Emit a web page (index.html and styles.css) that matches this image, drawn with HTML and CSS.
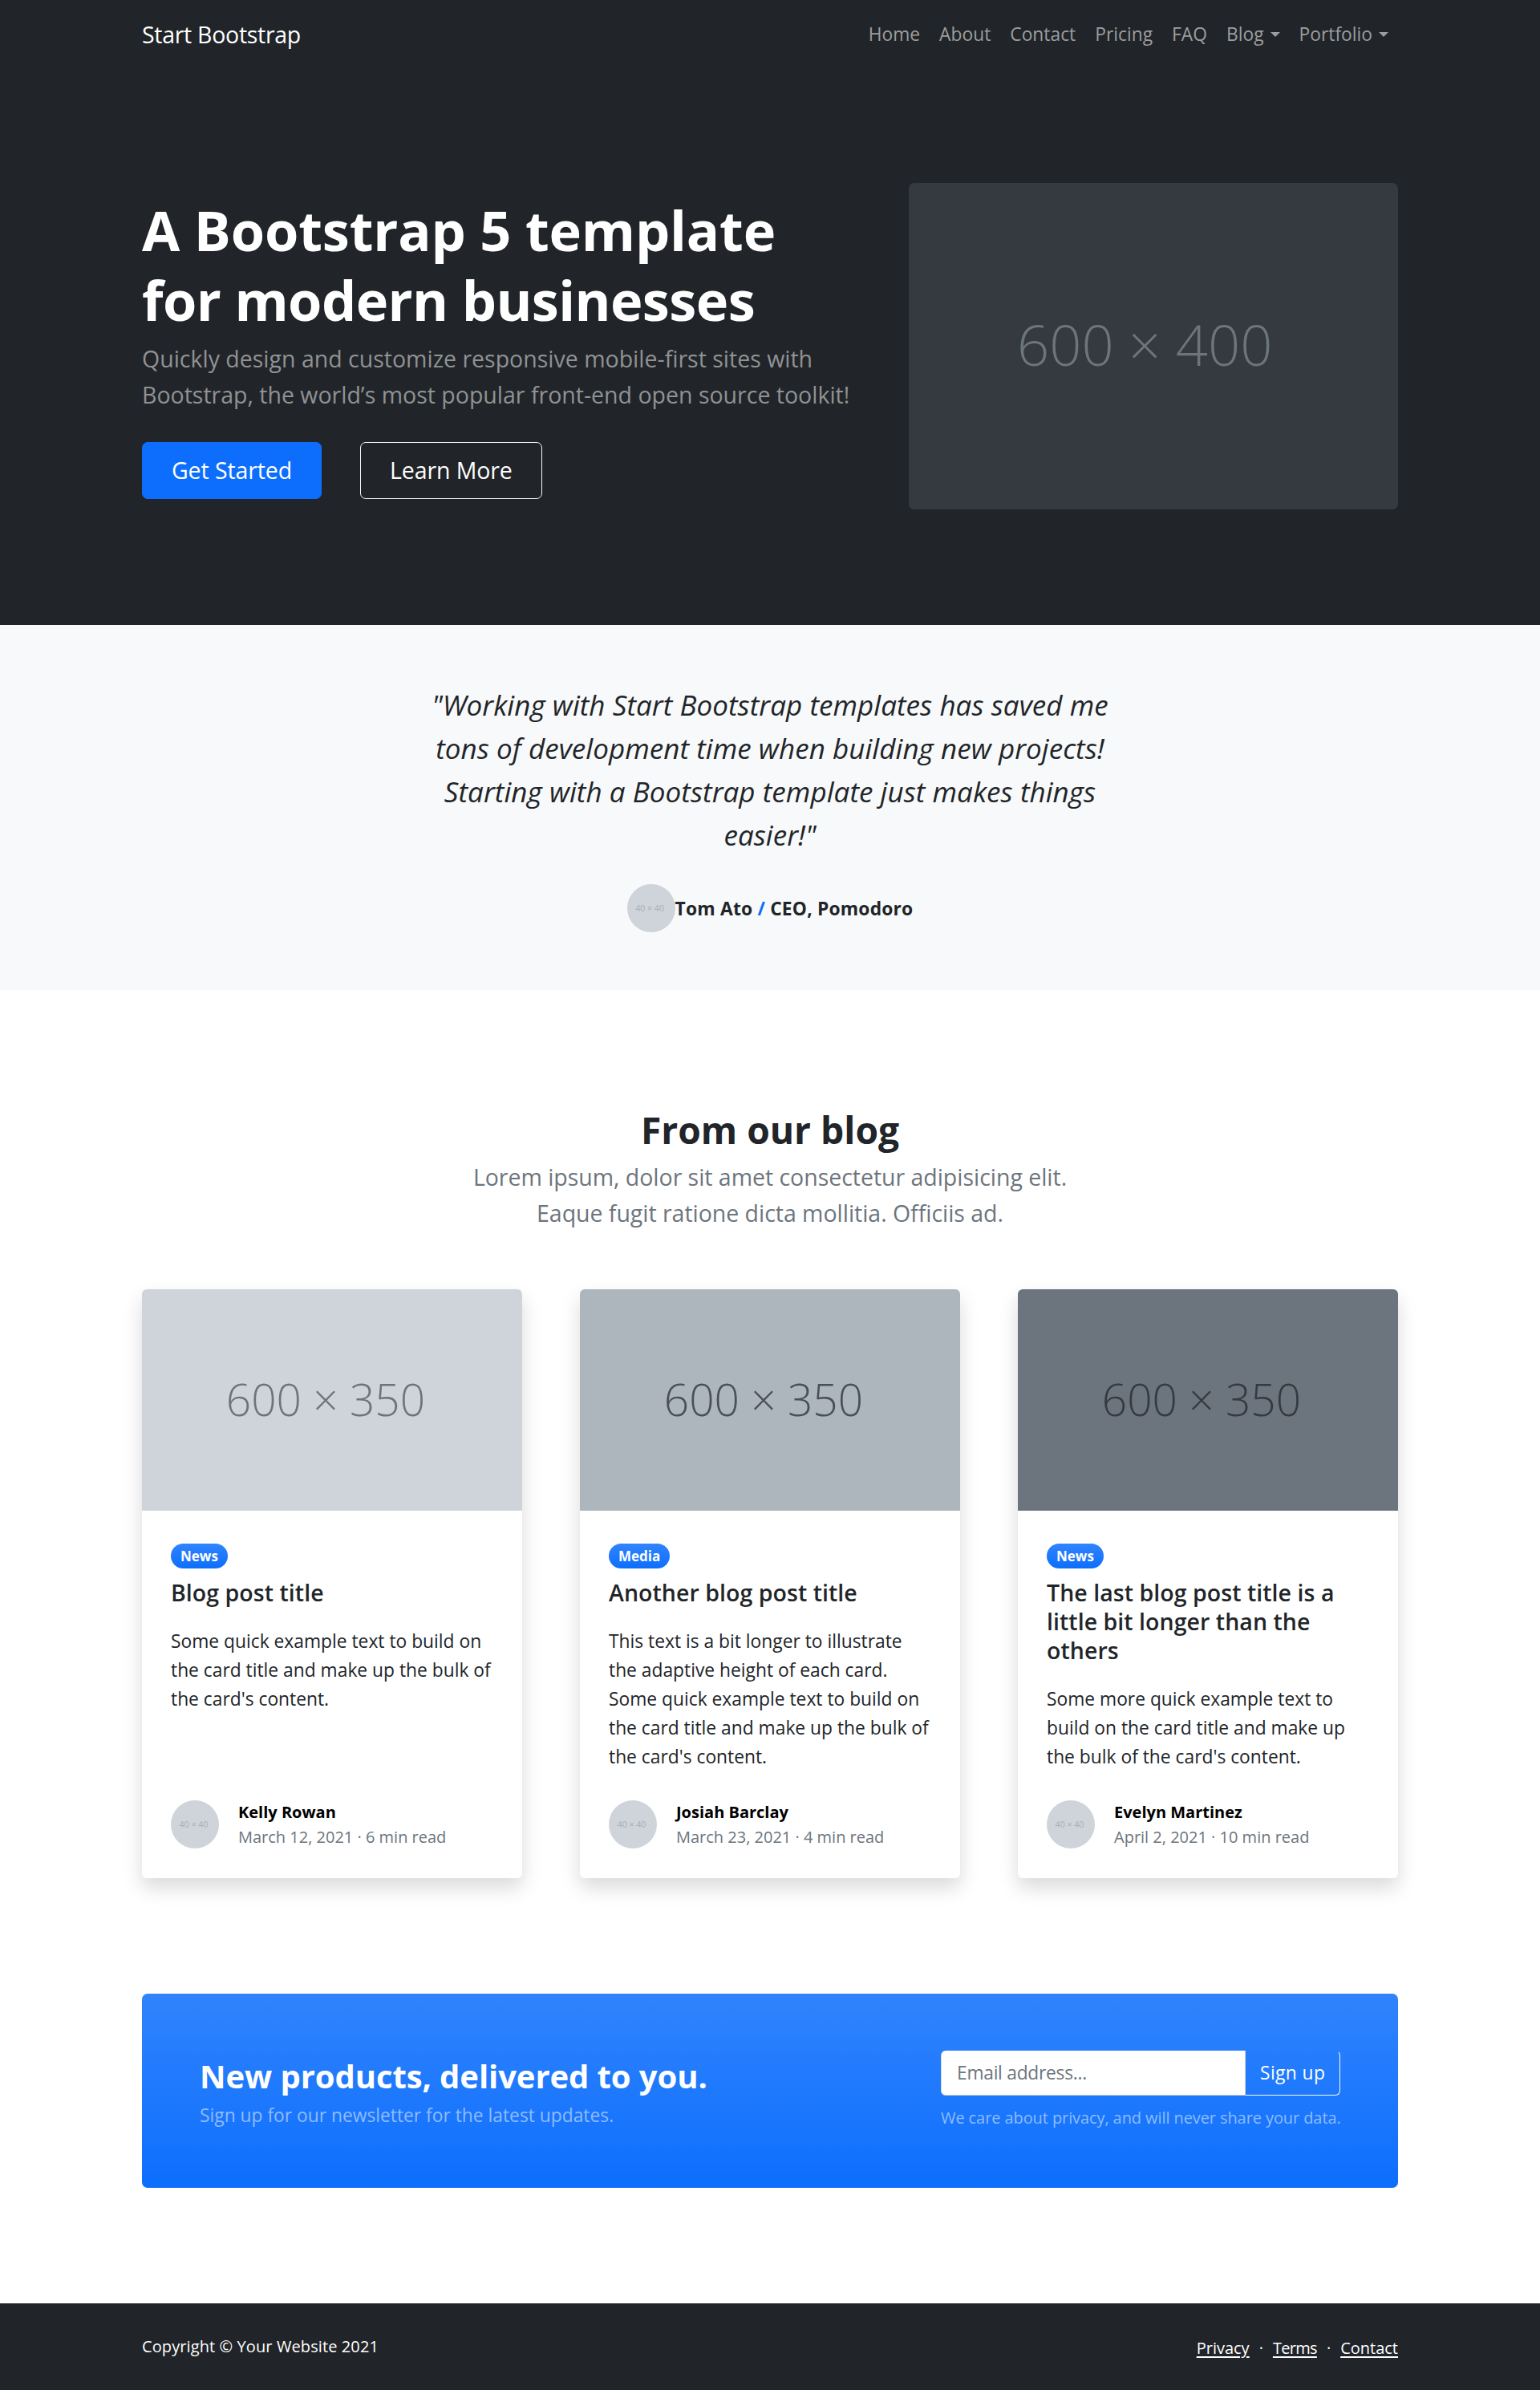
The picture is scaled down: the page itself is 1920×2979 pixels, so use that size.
FILE: index.html
```html
<!DOCTYPE html>
<html lang="en">
<head>
<meta charset="utf-8">
<title>Modern Business</title>
<link rel="stylesheet" href="styles.css">
</head>
<body>
<nav class="navbar">
  <div class="container navbar-inner">
    <a class="brand">Start Bootstrap</a>
    <ul class="nav">
      <li>Home</li><li>About</li><li>Contact</li><li>Pricing</li><li>FAQ</li>
      <li class="dropdown">Blog</li><li class="dropdown">Portfolio</li>
    </ul>
  </div>
</nav>
<header class="hero">
  <div class="container hero-row">
    <div class="hero-copy">
      <h1>A Bootstrap 5 template<br><span class="tight">for modern businesses</span></h1>
      <p>Quickly design and customize responsive mobile-first sites with<br>Bootstrap, the world’s most popular front-end open source toolkit!</p>
      <div class="actions"><a class="btn btn-primary">Get Started</a><a class="btn btn-outline">Learn More</a></div>
    </div>
    <div class="placeholder hero-image">600 × 400</div>
  </div>
</header>
<section class="testimonial">
  <blockquote>"Working with Start Bootstrap templates has saved me<br>tons of development time when building new projects!<br>Starting with a Bootstrap template just makes things<br>easier!"</blockquote>
  <div class="cite"><div class="avatar">40 × 40</div><div class="cite-name">Tom Ato <span class="slash">/</span> CEO, Pomodoro</div></div>
</section>
<section class="blog container">
  <h2>From our blog</h2>
  <p class="lead">Lorem ipsum, dolor sit amet consectetur adipisicing elit.<br>Eaque fugit ratione dicta mollitia. Officiis ad.</p>
  <div class="cards">
    <article class="card">
      <div class="placeholder card-image light">600 × 350</div>
      <div class="card-body">
        <div class="badge">News</div>
        <h5>Blog post title</h5>
        <p>Some quick example text to build on<br>the card title and make up the bulk of<br>the card's content.</p>
      </div>
      <div class="card-footer"><div class="avatar">40 × 40</div><div class="byline"><b>Kelly Rowan</b><div>March 12, 2021 · 6 min read</div></div></div>
    </article>
    <article class="card">
      <div class="placeholder card-image mid">600 × 350</div>
      <div class="card-body">
        <div class="badge">Media</div>
        <h5>Another blog post title</h5>
        <p>This text is a bit longer to illustrate<br>the adaptive height of each card.<br>Some quick example text to build on<br>the card title and make up the bulk of<br>the card's content.</p>
      </div>
      <div class="card-footer"><div class="avatar">40 × 40</div><div class="byline"><b>Josiah Barclay</b><div>March 23, 2021 · 4 min read</div></div></div>
    </article>
    <article class="card">
      <div class="placeholder card-image deep">600 × 350</div>
      <div class="card-body">
        <div class="badge">News</div>
        <h5>The last blog post title is a<br>little bit longer than the<br>others</h5>
        <p>Some more quick example text to<br>build on the card title and make up<br>the bulk of the card's content.</p>
      </div>
      <div class="card-footer"><div class="avatar">40 × 40</div><div class="byline"><b>Evelyn Martinez</b><div>April 2, 2021 · 10 min read</div></div></div>
    </article>
  </div>
  <aside class="signup">
    <div>
      <div class="signup-title">New products, delivered to you.</div>
      <div class="signup-text">Sign up for our newsletter for the latest updates.</div>
    </div>
    <div class="signup-form">
      <div class="input-group"><div class="input">Email address...</div><div class="submit">Sign up</div></div>
      <div class="privacy">We care about privacy, and will never share your data.</div>
    </div>
  </aside>
</section>
<footer class="footer">
  <div class="container footer-row">
    <div class="copyright">Copyright © Your Website 2021</div>
    <div class="links"><a>Privacy</a><span>·</span><a class="terms">Terms</a><span>·</span><a>Contact</a></div>
  </div>
</footer>
</body>
</html>
```
FILE: styles.css
```css
*{box-sizing:border-box}
body{margin:0;background:#fff;color:#212529;font:22.8px/36px "Open Sans","Noto Sans",sans-serif;white-space:nowrap}
h1,h2,h5,p,ul,blockquote{margin:0;padding:0}
.container{width:1566px;margin:0 auto}
.navbar,.hero,.footer{background:#212529;color:#fff}
.navbar-inner{height:84px;padding-top:2px;display:flex;align-items:center;justify-content:space-between}
.brand{font-size:28.5px;line-height:45px;letter-spacing:-.29px}
.nav{display:flex;list-style:none;color:#9b9d9e}
.nav li{padding:12px;display:flex;align-items:center}
.dropdown::after{content:"";margin-left:8px;border:6.8px solid transparent;border-top-color:currentColor;border-bottom:0}
.hero{padding:144px 0}
.hero-row{display:flex;justify-content:space-between;align-items:center}
h1{font-size:68.5px;line-height:86.4px;font-weight:700;letter-spacing:-.15px;padding-top:3.5px;margin-bottom:8.5px}
.tight{letter-spacing:-.6px}
.hero-copy p{font-size:28.5px;line-height:45px;color:#909294;margin-bottom:36px}
.actions{display:flex;gap:48px}
.btn{height:71px;padding:12px 36px;border:1px solid #f8f9fa;border-radius:7px;font-size:28.5px;line-height:45px;letter-spacing:-.1px}
.btn-primary{background:#0d6efd;border-color:#0d6efd}
.placeholder{display:flex;align-items:center;justify-content:center;font-weight:300}
.hero-image{width:610.5px;height:407px;border-radius:7px;background:#343a40;color:#6c757d;font-size:70.5px;padding:0 21px 6px 0}
.testimonial{background:#f8f9fa;padding:72px 0;text-align:center}
blockquote{font-size:35px;line-height:54px;font-style:italic;letter-spacing:.05px;padding-top:1px;margin-bottom:34px}
.cite{display:flex;justify-content:center;align-items:center}
.cite-name{font-weight:700;letter-spacing:.19px;padding-top:2px}
.slash{color:#0d6efd}
.avatar{width:60px;height:60px;border-radius:50%;background:#ced4da;color:#a9afb6;font-size:10.6px;line-height:61px;text-align:center;padding-right:3px}
.blog{padding:144px 0}
h2{font-size:46.2px;line-height:57px;text-align:center;padding-top:1.5px;margin-bottom:8.5px}
.lead{font-size:28.5px;line-height:45px;text-align:center;color:#6c757d;letter-spacing:-.03px;margin-bottom:72px}
.cards{display:grid;grid-template-columns:repeat(3,474px);gap:72px;margin-bottom:144px}
.card{display:flex;flex-direction:column;border-radius:6px;box-shadow:0 12px 24px rgba(0,0,0,.15);overflow:hidden}
.card-image{height:276px;font-size:55px;padding:0 16px 3px 0}
.light{background:#ced4da;color:#6c757d}
.mid{background:#adb5bd;color:#495057}
.deep{background:#6c757d;color:#343a40}
.card-body{padding:41px 36px 35px;flex:1}
.badge{width:max-content;height:31px;border-radius:16px;padding:0 12px;font-size:17px;font-weight:700;line-height:31px;color:#fff;background:linear-gradient(#3084fd,#0d6efd);margin-bottom:12px}
h5{font-size:28.5px;line-height:36px;font-weight:600;letter-spacing:.05px;margin-bottom:25px}
.card-footer{padding:0 36px 36px;display:flex;align-items:center;gap:24px}
.byline{font-size:20px;line-height:31px;color:#6c757d}
.byline b{display:block;color:#000}
.signup{height:242px;padding:0 72px 1px;display:flex;align-items:center;justify-content:space-between;border-radius:7px;background:linear-gradient(#3084fd,#0d6efd);color:#fff}
.signup-title{font-size:40px;line-height:63px;font-weight:700;letter-spacing:-.08px}
.signup-text,.privacy{color:#8fbcfe}
.signup-form{width:498px}
.input-group{display:flex;height:56px;margin-bottom:12px}
.input{flex:1;background:#fff;color:#6c757d;border:1px solid #ced4da;border-width:0 1px 1px;border-radius:6px 0 0 6px;padding:10px 19px;letter-spacing:-.27px}
.submit{width:118px;border:1px solid #f8f9fa;border-top-color:transparent;border-left:0;border-radius:0 6px 6px 0;padding:9px 0 9px 18px;letter-spacing:.4px}
.privacy{font-size:20px;line-height:31px;letter-spacing:-.09px}
.footer{padding:36px 0;font-size:20px}
.footer-row,.links{display:flex;justify-content:space-between}
.footer-row{height:36px}
.copyright{letter-spacing:.1px}
.links{gap:12px;padding-top:2px}
.links a{text-decoration:underline;text-underline-offset:3px}
.terms{letter-spacing:-.7px}
```
